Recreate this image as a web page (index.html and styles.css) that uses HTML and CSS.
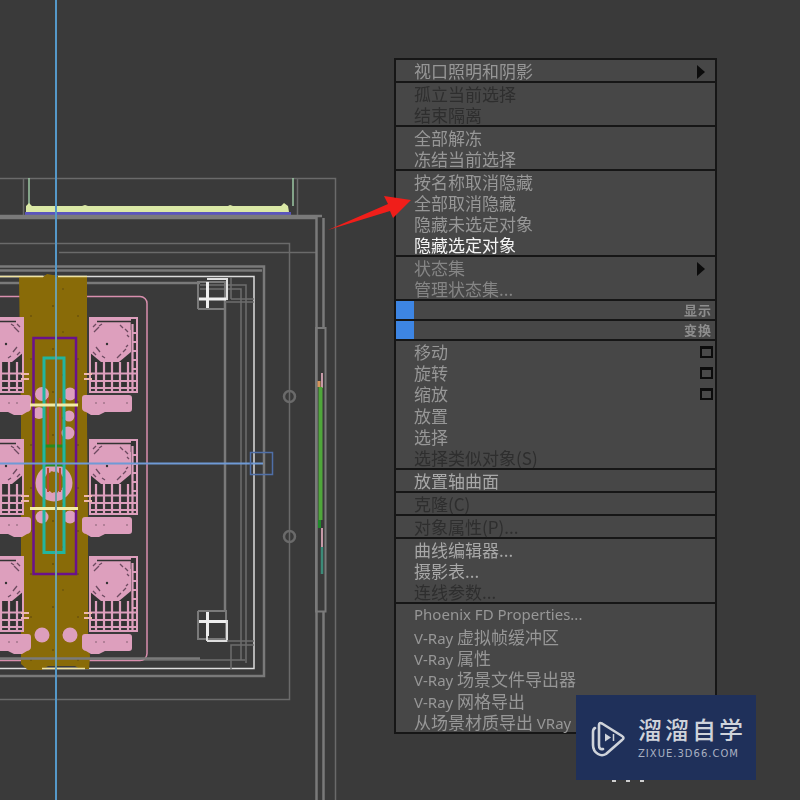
FILE: index.html
```html
<!DOCTYPE html>
<html lang="zh">
<head>
<meta charset="utf-8">
<title>视口右键菜单</title>
<link rel="stylesheet" href="styles.css">
</head>
<body>
<main class="viewport">
  <svg class="cad" width="800" height="800" viewBox="0 0 800 800" xmlns="http://www.w3.org/2000/svg">
    <defs>
      <pattern id="speck" width="47" height="43" patternUnits="userSpaceOnUse">
        <circle cx="6" cy="5" r="0.8" fill="#4a3a10"/><circle cx="31" cy="15" r="0.7" fill="#4a3a10"/>
        <circle cx="16" cy="31" r="0.8" fill="#5a4710"/>
      </pattern>
      <g id="fixture">
        <rect x="90" y="318" width="47" height="74" fill="#333" stroke="#dd9fbd" stroke-width="2"/>
        <path d="M89 319H131V352L119 362H101L89 352Z" fill="#dd9fbd"/>
        <path d="M97 321.500H131.500V330" stroke="#333" stroke-width="1.600" fill="none"/>
        <path d="M96 362V391M104 362V391M112 362V391M120 362V391M128 362V391M132.500 324V391M91 373.500H137M91 381H137M91 388H137M132 333H137M132 342H137M132 351H137M132 360H137M132 369H137" stroke="#dd9fbd" stroke-width="2.200" fill="none"/>
        <path d="M84 374H92M84 379H92" stroke="#eeb8b0" stroke-width="2" fill="none"/>
        <path d="M93 327l3-3M94 332l5-5M99 326l3-2M120 325l3 3M125 329l3 3M127 335l2 2M93 352l3 3M96 347l4 5M102 356l3 2M117 358l4-4M123 352l3-3M126 347l2-2" stroke="#6d4a60" stroke-width="1.300" fill="none"/>
        <circle cx="107" cy="344" r="1.200" fill="#333"/>
        <path d="M85 395H129Q132 395 132 398V409Q132 412 129 412H105L99 415H91L86 412Q82 411 82 408V398Q82 395 85 395Z" fill="#dd9fbd"/>
        <circle cx="96" cy="403" r="0.800" fill="#7a5a6a"/><circle cx="104" cy="403" r="0.800" fill="#7a5a6a"/><circle cx="127" cy="403" r="0.800" fill="#7a5a6a"/>
      </g>
    </defs>

    <g class="thin">
      <path d="M0 178.500H335.500V800"/>
      <path d="M23.500 178V218M297.500 178V218"/>
      <path d="M0 243.500H289.500V699.500H0"/>
      <path d="M59 252.500H316"/>
      <circle class="ring" cx="289.500" cy="396.500" r="5.500"/>
      <circle class="ring" cx="289.500" cy="536.500" r="5.500"/>
    </g>

    <path class="sage" d="M29 178V206M293 178V206"/>
    <path class="lamp" d="M26 212V206L29 203L32 206H82L85 205L88 206H228L230 205L233 206H281L284 203L288 206L289 212Z"/>
    <rect class="lamp-blue" x="25" y="212" width="266" height="3"/>

    <path class="mid" d="M0 218H316.500V800M323.500 218V328M323.500 612V800M0 216H322"/>
    <path class="wall" d="M316 328H325.500V611.500H316Z"/>
    <path class="mid" d="M0 266.500H264V676H0M0 270.500H262"/>

    <path class="white" d="M0 276.500H254V668.500H0"/>
    <path class="mid" d="M0 283H200"/>
    <path class="thin2" d="M200 285H246V663M200 289H241V660M0 660H245"/>
    <path class="mid" d="M225 300V612"/>
    <path class="mid2" d="M198 309V282H225V300M198 309H225"/>
    <path class="thin2" d="M231 299V277M231 299H254M225 302H254"/>
    <path class="white2" d="M207 279H227V300"/>
    <path class="cross" d="M207.500 282V308M199 299H226"/>

    <path class="mid2" d="M198 611H226V640M198 611V639H226"/>
    <path class="white2" d="M207 641H227V620M207 641V636"/>
    <path class="cross" d="M207.500 612V636M199 621.500H226"/>
    <path class="thin2" d="M231 669V645H254M227 641H254"/>

    <rect class="pink-line" x="-10" y="296.500" width="157" height="364" rx="7"/>

    <path class="gold" d="M19 277H43L47 274L58 276H87V420L88 520V640L90 656L89 669H80L75 666H48L42 670H28L21 664V420Z"/>
    <path class="speck" d="M19 277H87V640L89 669H28L21 664V420Z"/>
    <path class="cream" d="M0 276.500H43M58 276.500H87M42 668.500H85"/>

    <use href="#fixture"/>
    <use href="#fixture" y="122"/>
    <use href="#fixture" y="239"/>
    <use href="#fixture" transform="translate(113 0) scale(-1 1)"/>
    <use href="#fixture" transform="translate(113 122) scale(-1 1)"/>
    <use href="#fixture" transform="translate(113 239) scale(-1 1)"/>

    <g class="blob">
      <circle cx="42" cy="394" r="7"/><circle cx="70" cy="394" r="6.500"/>
      <circle cx="39" cy="413" r="6"/><circle cx="69" cy="416" r="5.500"/>
      <circle cx="68" cy="433" r="6.500"/><circle cx="42" cy="517" r="6.500"/>
      <circle cx="70" cy="517" r="6.500"/><circle cx="54" cy="483" r="18.500"/>
      <circle cx="42" cy="635" r="7.500"/><circle cx="70" cy="635" r="7.500"/>
    </g>
    <circle class="gold" cx="54" cy="482" r="11"/>
    <circle class="dash" cx="54" cy="482" r="11"/>
    <path class="red" d="M48 398V445M60 398V445M48 468V492M60 468V492"/>
    <rect class="dark-green" x="44" y="446" width="20" height="19"/>
    <rect class="teal" x="44" y="358" width="20" height="194.500"/>
    <rect class="purple" x="33.500" y="338" width="42.500" height="236"/>
    <path class="yellow" d="M30 405H78M30 508.500H78"/>
    <path class="mid" d="M0 658.500H200"/>

    <path class="cyan" d="M56 0V277"/><path class="cyan dim" d="M56 277V668"/><path class="cyan" d="M56 668V800"/>
    <path class="hline" d="M0 463.500H263"/>
    <rect class="gizmo" x="250.500" y="452.500" width="22" height="22"/>

    <path class="strip-orange" d="M319 381V387"/>
    <path class="strip-pink" d="M322 373V388"/>
    <path class="strip-green" d="M320.500 387V520"/>
    <path class="strip-dgreen" d="M319.500 520V528"/>
    <path class="strip-pink" d="M322 528V547"/>
    <path class="strip-teal" d="M322 547V574"/>
  </svg>

  <nav class="menu">
    <section class="group"><div class="row"><span>视口照明和阴影</span><i class="tri"></i></div></section>
    <section class="group">
      <div class="row off"><span>孤立当前选择</span></div>
      <div class="row off"><span>结束隔离</span></div>
    </section>
    <section class="group">
      <div class="row"><span>全部解冻</span></div>
      <div class="row"><span>冻结当前选择</span></div>
    </section>
    <section class="group">
      <div class="row"><span>按名称取消隐藏</span></div>
      <div class="row"><span>全部取消隐藏</span></div>
      <div class="row"><span>隐藏未选定对象</span></div>
      <div class="row on"><span>隐藏选定对象</span></div>
    </section>
    <section class="group">
      <div class="row dim"><span>状态集</span><i class="tri"></i></div>
      <div class="row dim"><span>管理状态集...</span></div>
    </section>
    <section class="group bar"><b class="swatch"></b><em class="bar-label">显示</em></section>
    <section class="group bar"><b class="swatch"></b><em class="bar-label">变换</em></section>
    <section class="group tools">
      <div class="row"><span>移动</span><i class="box"></i></div>
      <div class="row"><span>旋转</span><i class="box"></i></div>
      <div class="row"><span>缩放</span><i class="box"></i></div>
      <div class="row"><span>放置</span></div>
      <div class="row"><span>选择</span></div>
      <div class="row off"><span>选择类似对象(S)</span></div>
    </section>
    <section class="group"><div class="row lit"><span>放置轴曲面</span></div></section>
    <section class="group"><div class="row off"><span>克隆(C)</span></div></section>
    <section class="group"><div class="row off"><span>对象属性(P)...</span></div></section>
    <section class="group">
      <div class="row lit"><span>曲线编辑器...</span></div>
      <div class="row lit"><span>摄影表...</span></div>
      <div class="row off"><span>连线参数...</span></div>
    </section>
    <section class="group plugins">
      <div class="row"><span class="lat">Phoenix FD Properties...</span></div>
      <div class="row"><span><span class="lat">V-Ray</span> 虚拟帧缓冲区</span></div>
      <div class="row"><span><span class="lat">V-Ray</span> 属性</span></div>
      <div class="row"><span><span class="lat">V-Ray</span> 场景文件导出器</span></div>
      <div class="row"><span><span class="lat">V-Ray</span> 网格导出</span></div>
      <div class="row"><span>从场景材质导出 <span class="lat">VRay</span></span></div>
    </section>
  </nav>

  <svg class="pointer" width="100" height="50" viewBox="325 185 100 50" xmlns="http://www.w3.org/2000/svg">
    <polygon class="arrow" points="328,230 388,204 384,196 411,200 393,218 390,211"/>
  </svg>

  <aside class="mark">
    <svg class="mark-logo" width="36" height="38" viewBox="0 0 36 38" xmlns="http://www.w3.org/2000/svg">
      <path d="M8 26V6Q8 3 11 4.500L31 17Q34 19 31 21L15 35Q11 37.500 7 35Q2 32 2 26V13Q2 10 4 9M8 26Q8 31 12 30" fill="none" stroke="#cfd3da" stroke-width="2.600" stroke-linecap="round" stroke-linejoin="round"/>
      <path d="M14 14.500L20 18.500L14 22.500Z" fill="#cfd3da"/>
      <path d="M22.500 15V22" stroke="#cfd3da" stroke-width="1.500"/>
    </svg>
    <div class="mark-text">
      <strong class="mark-name">溜溜自学</strong>
      <small class="mark-url">ZIXUE.3D66.COM</small>
    </div>
  </aside>
  <span class="scrap"></span>
</main>
</body>
</html>
```

FILE: styles.css
```css
* { box-sizing: border-box; }
html, body { margin: 0; padding: 0; }
body { width: 800px; height: 800px; overflow: hidden; background: #3a3a3a; }

.viewport { position: relative; width: 800px; height: 800px; overflow: hidden; background: #3a3a3a; }

.cad { position: absolute; left: 0; top: 0; display: block; filter: blur(0.4px); }
.thin path, .thin circle { fill: none; stroke: #6a6a6a; stroke-width: 1.5; }
.thin .ring { stroke: #6a6a6a; stroke-width: 2.5; }
.sage { fill: none; stroke: #9cc7a4; stroke-width: 1.5; }
.lamp { fill: #dbe9a6; }
.lamp-blue { fill: #5a55bd; }
.mid { fill: none; stroke: #7a7a7a; stroke-width: 2.5; }
.mid2 { fill: none; stroke: #7a7a7a; stroke-width: 2; }
.thin2 { fill: none; stroke: #6e6e6e; stroke-width: 1.5; }
.wall { fill: none; stroke: #7a7a7a; stroke-width: 2; }
.white { fill: none; stroke: #dcdcdc; stroke-width: 1.5; }
.white2 { fill: none; stroke: #dedede; stroke-width: 2; }
.cross { fill: none; stroke: #eeeeee; stroke-width: 3; }
.pink-line { fill: none; stroke: #d98fae; stroke-width: 1.5; }
.gold { fill: #896b08; }
.speck { fill: url(#speck); }
.cream { fill: none; stroke: #efe2a0; stroke-width: 1.5; }
.blob circle { fill: #dd9fbd; }
.dash { fill: none; stroke: #dd9fbd; stroke-width: 1.5; stroke-dasharray: 3 2; }
.red { fill: none; stroke: #b8452f; stroke-width: 2; }
.dark-green { fill: none; stroke: #2a8a1c; stroke-width: 3; }
.teal { fill: none; stroke: #22b59f; stroke-width: 3; }
.purple { fill: none; stroke: #6a118c; stroke-width: 2.5; }
.yellow { fill: none; stroke: #f3eca6; stroke-width: 3; }
.cyan { fill: none; stroke: #5598c8; stroke-width: 2; }
.cyan.dim { stroke: #6f9fa6; }
.hline { fill: none; stroke: #6f9ad6; stroke-width: 2; }
.gizmo { fill: none; stroke: #4f6fa8; stroke-width: 1.5; }
.strip-orange { fill: none; stroke: #d6955c; stroke-width: 3; }
.strip-pink { fill: none; stroke: #c79aa8; stroke-width: 2; }
.strip-green { fill: none; stroke: #4fa63a; stroke-width: 4; }
.strip-dgreen { fill: none; stroke: #1f8a2a; stroke-width: 3; }
.strip-teal { fill: none; stroke: #3c8a78; stroke-width: 2.5; }

.pointer { position: absolute; left: 325px; top: 185px; display: block; filter: blur(0.4px); }
.arrow { fill: #f01e1a; }

.menu {
  position: absolute;
  left: 394px;
  top: 58px;
  width: 323px;
  height: 676px;
  display: flex;
  flex-direction: column;
  background: #474747;
  border-left: 2px solid #161616;
  border-right: 2px solid #161616;
  border-bottom: 2px solid #161616;
  font-family: "Noto Sans CJK SC", "Noto Sans", sans-serif;
  font-size: 17px;
  color: #979797;
  filter: blur(0.45px);
}
.group { border-top: 2px solid #161616; flex: none; }
.row {
  position: relative;
  height: 21px;
  line-height: 21px;
  padding-left: 18px;
  white-space: nowrap;
}
.tools .row { height: 21.2px; }
.plugins .row { height: 21.4px; }
.row > span { display: block; height: 21px; overflow: visible; }
.lat { font-family: "Noto Sans", sans-serif; font-size: 15px; }
.off { color: #2e2e2e; }
.dim { color: #858585; }
.lit { color: #a8a8a8; }
.on { color: #f4f4f4; }

.tri {
  position: absolute;
  right: 10px;
  top: 5px;
  width: 0;
  height: 0;
  border-left: 8px solid #0c0c0c;
  border-top: 7px solid transparent;
  border-bottom: 7px solid transparent;
}
.box {
  position: absolute;
  right: 2px;
  top: 5px;
  width: 13px;
  height: 12px;
  border: 2px solid #0c0c0c;
  border-top-width: 3px;
  background: #4a4a4a;
}

.bar { height: 20px; display: flex; align-items: center; justify-content: space-between; padding-right: 3px; }
.swatch { width: 18px; height: 18px; background: #3d85e3; }
.bar-label {
  font-style: normal;
  font-weight: 700;
  font-size: 13px;
  line-height: 18px;
  color: #8e8e8e;
  letter-spacing: 1px;
}

.mark {
  position: absolute;
  left: 576px;
  top: 695px;
  width: 180px;
  height: 85px;
  display: flex;
  align-items: center;
  gap: 11px;
  padding: 0 0 0 15px;
  background: #1f305a;
}
.mark-logo { display: block; flex: none; }
.mark-text { display: flex; flex-direction: column; align-items: flex-start; }
.mark-name {
  font-family: "Noto Sans CJK SC", sans-serif;
  font-weight: 500;
  font-size: 24px;
  line-height: 28px;
  letter-spacing: 3px;
  color: #cfd3da;
}
.mark-url {
  font-family: "DejaVu Sans", sans-serif;
  font-size: 10px;
  line-height: 14px;
  letter-spacing: 1px;
  color: #a9b1c2;
  margin-top: 4px;
}
.scrap { position: absolute; left: 612px; top: 780px; width: 40px; height: 2px; background: repeating-linear-gradient(90deg, #cfcfcf 0 4px, transparent 4px 14px); }
```
